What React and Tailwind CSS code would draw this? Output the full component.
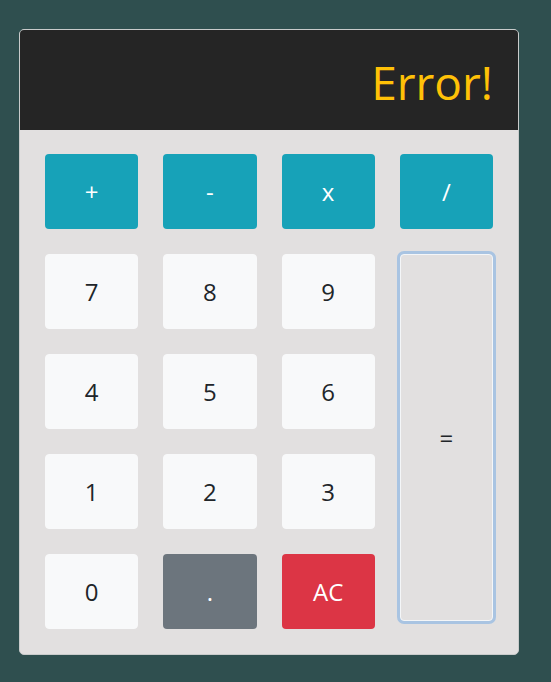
import React from "react";

const ops = ["+", "-", "x", "/"];

export default function App() {
  const light =
    "rounded-[4px] bg-[#f8f9fa] border border-[#f8f9fa] text-[#212529] text-[24px] flex items-center justify-center";

  return (
    <div
      className="min-h-[682px] w-full bg-[#2f4f4f] pt-[29px] pl-[19px]"
      style={{ fontFamily: '"Open Sans", "Noto Sans", sans-serif' }}
    >
      <div className="w-[500px] h-[626px] border border-[#c9cbcb] rounded-[5px] bg-[#e2e0e0] overflow-hidden flex flex-col">
        {/* Display */}
        <div className="h-[100px] bg-[#252525] flex items-center justify-end pr-[25px] pt-[4px]">
          <span className="text-[#ffc107] text-[46px] leading-none">Error!</span>
        </div>

        {/* Keys */}
        <div className="grid grid-cols-4 grid-rows-[repeat(5,75px)] gap-x-[25px] gap-y-[25px] px-[25px] pt-[24px]">
          {ops.map((o) => (
            <div
              key={o}
              className="rounded-[4px] bg-[#17a2b8] text-white text-[24px] flex items-center justify-center"
            >
              {o}
            </div>
          ))}

          <div className={light}>7</div>
          <div className={light}>8</div>
          <div className={light}>9</div>
          <div className="row-span-4 self-start h-[367px] rounded-[4px] border border-[#f4f6f8] bg-[#e2e0e0] ring-[3px] ring-[#a9c4e2] text-[#212529] text-[24px] flex items-center justify-center">
            =
          </div>

          <div className={light}>4</div>
          <div className={light}>5</div>
          <div className={light}>6</div>

          <div className={light}>1</div>
          <div className={light}>2</div>
          <div className={light}>3</div>

          <div className={light}>0</div>
          <div className="rounded-[4px] bg-[#6c757d] text-white text-[24px] flex items-center justify-center">
            .
          </div>
          <div className="rounded-[4px] bg-[#dc3545] text-white text-[24px] flex items-center justify-center">
            AC
          </div>
        </div>
      </div>
    </div>
  );
}
